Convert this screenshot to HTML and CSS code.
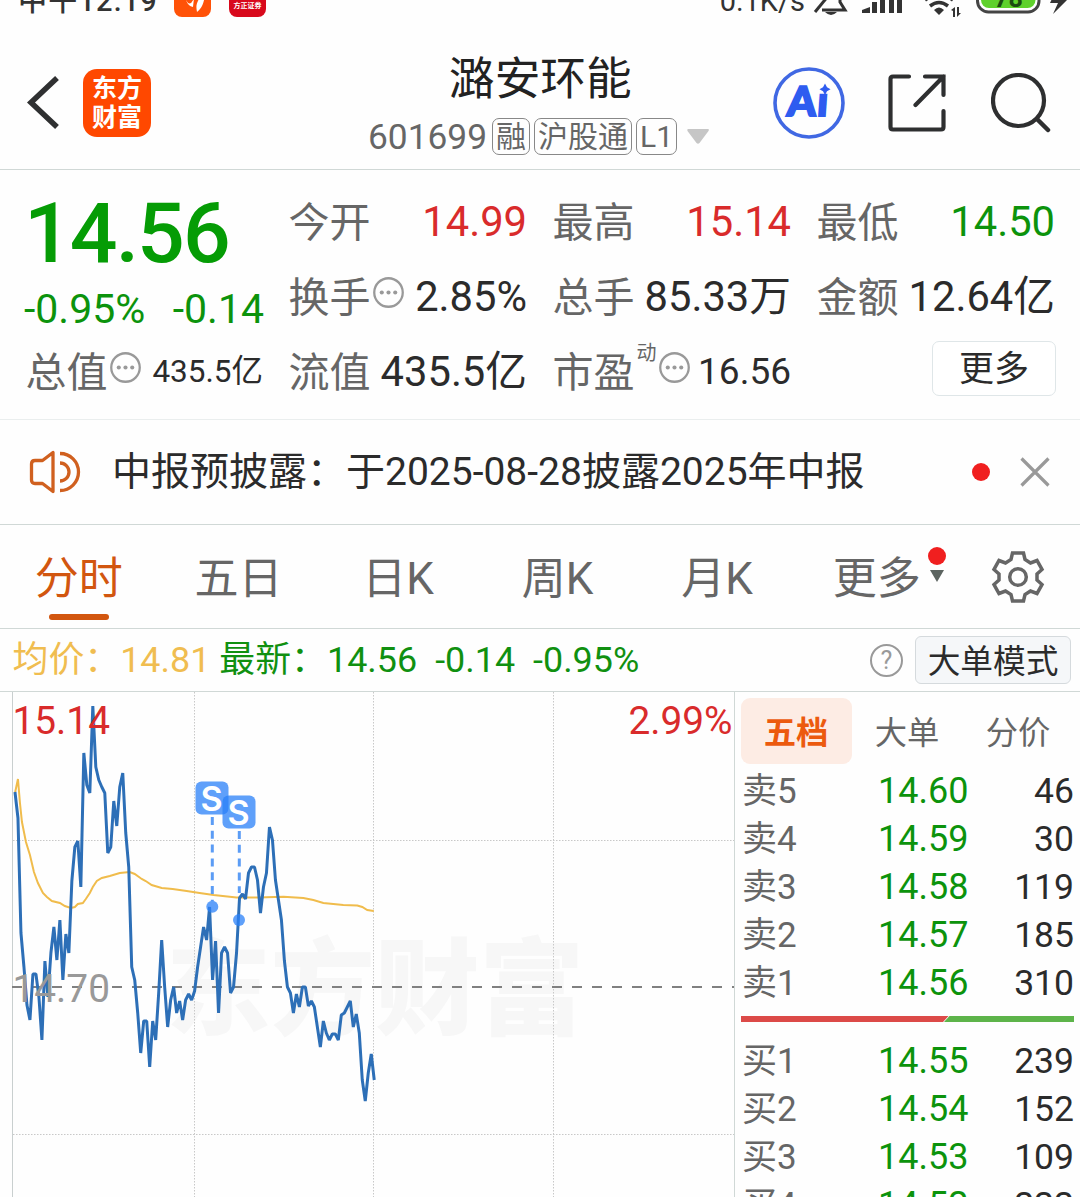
FILE: index.html
```
<!DOCTYPE html>
<html lang="zh-CN">
<head>
  <meta charset="UTF-8">
  <meta name="viewport" content="width=device-width, initial-scale=1.0">
  <title>潞安环能 601699</title>
  <link rel="stylesheet" href="styles.css">
</head>
<body>
  <div class="app">
    <!-- Status bar -->
    <div class="status-bar">
      <div class="status-left">
        <span class="status-time">中午12:19</span>
        <svg class="status-app" width="37" height="37" viewBox="0 0 37 37">
          <rect width="37" height="37" rx="8" fill="#ff5208"/>
          <path d="M12 20 Q16 28 20 18 L19 27 Q14 26 12 20Z M31 14 C30 24 27 29 23 32 C22 27 22 24 25 19Z" fill="#fff"/>
        </svg>
        <span class="status-broker">方正证券</span>
      </div>
      <div class="status-right">
        <span class="status-speed">0.1K/s</span>
        <svg width="275" height="40" viewBox="805 -22 275 40">
          <g fill="none" stroke="#333" stroke-width="3">
            <path d="M815 12 L838 -16"/>
            <path d="M822 10 H845 L840 2 V-8"/>
          </g>
          <path d="M825 12 H837 Q831 18 825 12Z" fill="#333"/>
          <g fill="#333">
            <path d="M862 13 V10 L870 7 V13Z"/>
            <rect x="872" y="2" width="5" height="11"/>
            <rect x="880" y="-3" width="5" height="16"/>
            <rect x="889" y="-8" width="5" height="21"/>
            <rect x="897" y="-12" width="5" height="25"/>
            <path d="M934 10 Q939 5 944 10 L939 15Z"/>
            <path d="M951 10 L955 7 V17 H953 V11Z M957 7 H959 V13 H961 L957 17Z"/>
            <path d="M1068 -1 L1053 14 L1058 3 L1050 3 L1058 -14 L1060 -1Z"/>
          </g>
          <path d="M925 0 Q939 -10 953 0 M930 6 Q939 -1 948 6" fill="none" stroke="#333" stroke-width="3.5"/>
          <rect x="977.500" y="-18" width="61.500" height="30" rx="11" fill="#fff" stroke="#444" stroke-width="3"/>
          <rect x="981" y="-14" width="54.500" height="22" rx="8" fill="#5fd12c"/>
          <text x="1008.500" y="7" class="battery-text">78</text>
        </svg>
      </div>
    </div>

    <!-- Header -->
    <div class="header">
      <svg class="back" width="34" height="58" viewBox="26 74 34 58">
        <path d="M57 78 L31 102.500 L57 127" fill="none" stroke="#2f3031" stroke-width="5.500"/>
      </svg>
      <div class="logo">东方<br>财富</div>
      <div class="stock">
        <div class="stock-name">潞安环能</div>
        <div class="stock-code">
          <span class="code">601699</span>
          <span class="tag">融</span>
          <span class="tag">沪股通</span>
          <span class="tag">L1</span>
          <svg width="22" height="15" viewBox="0 0 22 15"><path d="M1 0 H21 Q22.500 0 21.500 2 L12.500 14 Q11 15.500 9.500 14 L0.500 2 Q0 0 1 0Z" fill="#c6c6c6"/></svg>
        </div>
      </div>
      <div class="header-icons">
        <svg width="72" height="72" viewBox="0 0 72 72">
          <circle cx="36" cy="36" r="34" fill="none" stroke="#4068e3" stroke-width="3.600"/>
          <g transform="translate(0 48.500) skewX(-4)">
            <text x="13.500" y="0" class="ai-text">A</text>
            <text x="43.500" y="0.500" class="ai-text">ı</text>
          </g>
          <path d="M52 16.500 L54 20.300 L57.500 22.300 L54 24.300 L52 28 L50 24.300 L46.500 22.300 L50 20.300Z" fill="#2e5cf0"/>
        </svg>
        <svg width="58" height="58" viewBox="0 0 58 58">
          <path d="M21 2.500 H5 Q2.500 2.500 2.500 5 V53 Q2.500 55.500 5 55.500 H53 Q55.500 55.500 55.500 53 V37 M37 2.500 H55.500 V21 M55.500 2.500 L27.500 31" fill="none" stroke="#2e2f30" stroke-width="4.200" stroke-linecap="round"/>
        </svg>
        <svg class="search" width="60" height="60" viewBox="0 0 60 60">
          <circle cx="27.500" cy="27.500" r="25.500" fill="none" stroke="#2e2f30" stroke-width="4.200"/>
          <path d="M46 46 L57 57" stroke="#2e2f30" stroke-width="4.500" stroke-linecap="round"/>
        </svg>
      </div>
    </div>

    <!-- Quote summary -->
    <div class="quote">
      <div class="quote-main">
        <div class="price">14.56</div>
        <div class="change"><span>-0.95%</span><span>-0.14</span></div>
        <div class="cell">
          <span class="label">总值</span>
          <svg class="dots" viewBox="0 0 30 30"><use href="#more-dots"/></svg>
          <span class="value small">435.5亿</span>
        </div>
      </div>
      <div class="quote-grid">
        <div class="cell"><span class="label">今开</span><span class="value red">14.99</span></div>
        <div class="cell"><span class="label">最高</span><span class="value red">15.14</span></div>
        <div class="cell"><span class="label">最低</span><span class="value green">14.50</span></div>
        <div class="cell">
          <span class="label">换手</span>
          <svg class="dots" viewBox="0 0 30 30">
            <g id="more-dots">
              <circle cx="15" cy="15" r="13.800" fill="none" stroke="#999" stroke-width="2.200"/>
              <circle cx="8.500" cy="15" r="2" fill="#999"/>
              <circle cx="15" cy="15" r="2" fill="#999"/>
              <circle cx="21.500" cy="15" r="2" fill="#999"/>
            </g>
          </svg>
          <span class="value">2.85%</span>
        </div>
        <div class="cell"><span class="label">总手</span><span class="value">85.33万</span></div>
        <div class="cell"><span class="label">金额</span><span class="value">12.64亿</span></div>
        <div class="cell"><span class="label">流值</span><span class="value">435.5亿</span></div>
        <div class="cell">
          <span class="label">市盈</span><span class="sup">动</span>
          <svg class="dots" viewBox="0 0 30 30"><use href="#more-dots"/></svg>
          <span class="value medium">16.56</span>
        </div>
        <div class="cell"><button class="more-button">更多</button></div>
      </div>
    </div>

    <!-- Notice -->
    <div class="notice">
      <svg width="52" height="44" viewBox="0 0 52 44">
        <path d="M24 2.500 V41.500 L13.500 33.500 H6 Q2.500 33.500 2.500 30 V14 Q2.500 10.500 6 10.500 H13.500Z M31 3.500 A18.500 18.500 0 0 1 31 40.500 M31 13 A9 9 0 0 1 31 31" fill="none" stroke="#d0601f" stroke-width="3.300" stroke-linejoin="round"/>
      </svg>
      <span class="notice-text">中报预披露：于2025-08-28披露2025年中报</span>
      <span class="red-dot"></span>
      <svg width="30" height="30" viewBox="0 0 30 30"><path d="M1.500 1.500 L28.500 28.500 M28.500 1.500 L1.500 28.500" stroke="#999" stroke-width="3.200"/></svg>
    </div>

    <!-- Period tabs -->
    <div class="tabs">
      <div class="tab active">分时</div>
      <div class="tab">五日</div>
      <div class="tab">日K</div>
      <div class="tab">周K</div>
      <div class="tab">月K</div>
      <div class="tab tab-more">更多<span class="red-dot tab-dot"></span><span class="caret"></span></div>
      <svg class="gear" width="54" height="54" viewBox="-27 -27 54 54">
        <path d="M-5.500 -24 H5.500 L7 -17.500 L12.500 -14 L19 -16.500 L24 -7.500 L19 -3 V3 L24 7.500 L19 16.500 L12.500 14 L7 17.500 L5.500 24 H-5.500 L-7 17.500 L-12.500 14 L-19 16.500 L-24 7.500 L-19 3 V-3 L-24 -7.500 L-19 -16.500 L-12.500 -14 L-7 -17.500Z" fill="none" stroke="#666" stroke-width="3.500"/>
        <circle r="8.300" fill="none" stroke="#666" stroke-width="3.500"/>
      </svg>
    </div>

    <!-- Average / latest -->
    <div class="info">
      <span class="avg">均价：14.81</span>
      <span class="latest">最新：14.56</span>
      <span class="latest">-0.14</span>
      <span class="latest">-0.95%</span>
      <span class="help">?</span>
      <button class="mode-button">大单模式</button>
    </div>

    <div class="main">
      <!-- Intraday chart -->
      <svg class="chart" width="734" height="505" viewBox="0 692 734 505">
        <text x="166" y="1026" class="watermark">东方财富</text>
        <g class="grid">
          <path d="M194.500 692 V1197 M373.500 692 V1197 M553.500 692 V1197 M13 840.500 H734 M13 1134.500 H734"/>
        </g>
        <path d="M12.500 692 V1197" stroke="#c9cfcf"/>
        <path d="M12 987 H734" class="base-line"/>
        <g transform="scale(.998 1)">
          <polyline class="avg-line" points="15,793 18,779 20,803 22,822 26,842 30,855 34,872 38,883 43,893 47,897 52,901 60,903 65,906 71,908 75,907 78,904 83,903 86,899 90,893 93,887 97,881 102,878 110,876 120,873 130,872 135,874 142,879 146,881 152,885 162,888 173,889 187,891 200,893 214,895 237,897.5 258,897.5 284,896.700 304,898 314,900 324,903 344,905 358,905.500 363,907 368,910 374.500,911"/>
          <polyline class="price-line" points="15,792 18,818 21,933 24,967 27,1005 30,1020 33,974 36,974 39,997 42,1040 45,961 48,997 51,953 54,927 57,960 60,920 63,980 66,934 69,953 72,881 75,847 78,841 81,887 84,753 87,785 90,793 93,706 96,767 99,780 102,787 105,793 108,853 111,847 114,801 117,826 120,787 123,773 126,833 129,867 132,967 135,980 138,1013 141,1053 144,1021 147,1021 150,1067 153,1021 156,1040 159,993 162,940 165,987 168,1027 171,1000 174,987 177,1013 180,1001 183,1020 186,1000 189,994 192,1000 195,991 198,967 201,947 204,927 207,940 210,907 213,980 216,941 219,1013 222,953 225,947 228,953 231,993 234,987 237,953 240,898 243,894 246,899 249,873 252,867 255,867 258,880 261,913 264,887 267,873 270,827 273,840 276,880 279,900 282,920 285,961 288,987 291,993 294,1013 297,994 300,1007 303,987 306,987 309,1006 312,1001 315,1007 318,1027 321,1047 324,1021 327,1033 330,1040 333,1034 336,1034 339,1040 342,1015 345,1013 348,1007 351,1001 354,1027 357,1014 360,1033 363,1080 366,1101 369,1073 372,1054 375,1080"/>
        </g>
        <!-- Sell markers -->
        <g class="marker">
          <path d="M212.300 817 V901"/>
          <path d="M239.300 831 V893"/>
          <circle cx="212.300" cy="906.700" r="6"/>
          <circle cx="239" cy="920" r="6"/>
          <rect x="195.500" y="781.500" width="33" height="33" rx="6"/>
          <rect x="222.500" y="795.500" width="33" height="33" rx="6"/>
          <text x="211.500" y="810.500">S</text>
          <text x="238.500" y="824.500">S</text>
        </g>
        <text x="12.500" y="734" class="axis high">15.14</text>
        <text x="732.500" y="734" class="axis high end">2.99%</text>
        <text x="12.500" y="1002" class="axis middle">14.70</text>
      </svg>

      <!-- Order book -->
      <div class="book">
        <div class="book-tabs">
          <span class="book-tab selected">五档</span>
          <span class="book-tab">大单</span>
          <span class="book-tab">分价</span>
        </div>
        <div class="book-row"><span>卖5</span><span class="book-price">14.60</span><span class="book-size">46</span></div>
        <div class="book-row"><span>卖4</span><span class="book-price">14.59</span><span class="book-size">30</span></div>
        <div class="book-row"><span>卖3</span><span class="book-price">14.58</span><span class="book-size">119</span></div>
        <div class="book-row"><span>卖2</span><span class="book-price">14.57</span><span class="book-size">185</span></div>
        <div class="book-row"><span>卖1</span><span class="book-price">14.56</span><span class="book-size">310</span></div>
        <svg class="ratio" width="333" height="6" viewBox="0 0 333 6">
          <path d="M0 0 H207.500 L202 6 H0Z" fill="#dc4a48"/>
          <path d="M208.500 0 H333 V6 H203Z" fill="#5db44a"/>
        </svg>
        <div class="book-row"><span>买1</span><span class="book-price">14.55</span><span class="book-size">239</span></div>
        <div class="book-row"><span>买2</span><span class="book-price">14.54</span><span class="book-size">152</span></div>
        <div class="book-row"><span>买3</span><span class="book-price">14.53</span><span class="book-size">109</span></div>
        <div class="book-row"><span>买4</span><span class="book-price">14.52</span><span class="book-size">222</span></div>
      </div>
    </div>
  </div>
</body>
</html>
```
FILE: styles.css
```
* {
  box-sizing: border-box;
}

body {
  margin: 0;
  background: #fefefe;
  color: #2b2b2b;
  font-family: Roboto, "Noto Sans CJK SC", sans-serif;
}

svg {
  display: block;
  flex: none;
}

button {
  font-family: inherit;
  color: #2b2b2b;
  padding: 0;
}

.app {
  width: 1080px;
  height: 1197px;
  overflow: hidden;
}

/* Status bar, scrolled partly out of view */
.status-bar {
  height: 30px;
  display: flex;
  justify-content: space-between;
  color: #333;
}

.status-left,
.status-right {
  display: flex;
  align-items: flex-start;
  margin-top: -22px;
}

.status-left {
  padding-left: 18px;
}

.status-time,
.status-speed {
  font-size: 29px;
  line-height: 46px;
  font-weight: 500;
}

.status-time {
  width: 156px;
  letter-spacing: 1.200px;
  white-space: nowrap;
}

.status-speed {
  font-weight: 400;
}

.status-app {
  margin-top: 2px;
}

.status-broker {
  width: 37px;
  height: 37px;
  margin: 2px 0 0 18px;
  padding-top: 17px;
  border-radius: 8px;
  background: #d8091c;
  color: #fff;
  font-size: 7px;
  font-weight: 700;
  line-height: 18px;
  text-align: center;
}

.battery-text {
  font-size: 25px;
  font-weight: 700;
  text-anchor: middle;
  fill: #1c4a10;
}

/* Header */
.header {
  height: 140px;
  display: flex;
  align-items: center;
  padding: 6px 29px 0 26px;
  border-bottom: 1px solid #d0d8d6;
}

.logo {
  width: 68px;
  height: 68px;
  margin-left: 23px;
  padding-top: 5px;
  border-radius: 14px;
  background: #ff4800;
  color: #fff;
  font-size: 25px;
  font-weight: 700;
  line-height: 29px;
  text-align: center;
}

.stock {
  width: 350px;
  margin: 6px 0 0 217px;
  white-space: nowrap;
}

.stock-name {
  height: 62px;
  margin-left: 81px;
  font-size: 45.700px;
  line-height: 62px;
  color: #222;
}

.stock-code {
  display: flex;
  align-items: center;
  gap: 4px;
  color: #666;
}

.stock-code svg {
  margin-left: 6px;
}

.code {
  margin-right: 1px;
  font-size: 35.300px;
  line-height: 52px;
}

.tag {
  height: 37px;
  padding: 0 3px;
  border: 1.500px solid #888;
  border-radius: 7px;
  font-size: 30px;
  line-height: 36px;
}

.header-icons {
  display: flex;
  align-items: center;
  margin-left: auto;
  gap: 43px;
}

.header-icons .search {
  margin-left: 2px;
}

.ai-text {
  font-family: Lato, sans-serif;
  font-size: 41px;
  font-weight: 900;
  fill: #2e5cf0;
  stroke: #2e5cf0;
  stroke-width: 2px;
}

/* Quote summary */
.quote {
  height: 250px;
  display: flex;
  padding: 14px 25px 0 26px;
  border-bottom: 1px solid #eaeeee;
}

.quote-main {
  width: 237px;
  margin-right: 26px;
}

.price {
  height: 99px;
  margin-left: -2px;
  font-size: 84px;
  font-weight: 500;
  line-height: 99px;
  letter-spacing: -1.900px;
  color: #059c05;
}

.change {
  height: 51px;
  display: flex;
  justify-content: space-between;
  margin: 0 -1px 0 -2px;
  font-size: 41px;
  line-height: 52px;
  color: #0c930c;
}

.quote-grid {
  display: grid;
  grid-template-columns: 238px 238px 238px;
  grid-auto-rows: 75px;
  column-gap: 26px;
}

.cell {
  height: 75px;
  display: flex;
  align-items: center;
  line-height: 75px;
}

.label {
  margin: 3px 0 0 -0.500px;
  font-size: 41px;
  color: #666;
}

.dots {
  width: 31px;
  height: 31px;
  margin: -8px 0 0 2px;
}

.value {
  margin-left: auto;
  font-size: 41.700px;
  white-space: nowrap;
}

.value.small {
  font-size: 31.500px;
}

.value.medium {
  font-size: 37px;
}

.sup {
  margin: -37px 0 0 2px;
  font-size: 20px;
  color: #666;
}

.red {
  color: #d92b2b;
}

.green {
  color: #0c930c;
}

.more-button {
  width: 124px;
  height: 55px;
  margin: -6px -1px 0 auto;
  border: 1.500px solid #dfe6e8;
  border-radius: 7px;
  background: #fff;
  font-size: 35px;
  line-height: 52px;
  padding-top: 2px;
}

/* Notice */
.notice {
  height: 105px;
  display: flex;
  align-items: center;
  padding: 0 30px 0 29px;
  border-bottom: 1px solid #d0d8d6;
}

.notice-text {
  flex: 1;
  margin-left: 31px;
  font-size: 39px;
  line-height: 104px;
}

.red-dot {
  width: 18px;
  height: 18px;
  border-radius: 50%;
  background: #f01f1f;
}

.notice .red-dot {
  margin-right: 30px;
}

/* Period tabs */
.tabs {
  height: 104px;
  display: grid;
  grid-template-columns: repeat(6, 159.600px) 1fr;
  align-items: center;
  margin-left: -1px;
  border-bottom: 1px solid #d0d8d6;
  font-size: 44px;
  color: #666;
}

.tab {
  height: 104px;
  line-height: 108px;
  position: relative;
  text-align: center;
}

.tab.active {
  color: #d2560f;
}

.tab.active::after {
  content: "";
  position: absolute;
  left: 50px;
  bottom: 9px;
  width: 60px;
  height: 6px;
  border-radius: 3px;
  background: #d2560f;
}

.tab-dot {
  position: absolute;
  right: 11px;
  top: 22px;
}

.caret {
  position: absolute;
  right: 13px;
  top: 45px;
  border: 7px solid transparent;
  border-top: 12px solid #5c6460;
  border-bottom: 0;
}

.gear {
  margin-left: 34.500px;
}

/* Average / latest */
.info {
  height: 63px;
  display: flex;
  align-items: center;
  padding: 0 9px 0 12.500px;
  border-bottom: 1px solid #d0d8d6;
  font-size: 35.900px;
  line-height: 62px;
  white-space: nowrap;
}

.avg {
  margin-right: 9px;
  color: #f0bd50;
}

.latest {
  margin-right: 18px;
  color: #109010;
}

.help {
  width: 33px;
  height: 33px;
  margin-left: auto;
  border: 2.500px solid #999;
  border-radius: 50%;
  color: #999;
  font-size: 25px;
  line-height: 29px;
  text-align: center;
}

.mode-button {
  width: 156px;
  height: 48px;
  margin-left: 12px;
  padding-top: 5px;
  border: 1px solid #d5dadd;
  border-radius: 6px;
  background: #f5f7f9;
  font-size: 32.700px;
  line-height: 41px;
}

.main {
  display: flex;
  height: 505px;
}

/* Chart */
.watermark {
  font-size: 104.500px;
  font-weight: 900;
  fill: #f7f7f7;
}

.grid {
  fill: none;
  stroke: #c8c8c8;
  stroke-dasharray: 1.500 1.500;
}

.base-line {
  stroke: #808080;
  stroke-width: 2;
  stroke-dasharray: 10 10;
}

.avg-line {
  fill: none;
  stroke: #f0bc4c;
  stroke-width: 2;
}

.price-line {
  fill: none;
  stroke: #2d6fb7;
  stroke-width: 3;
  stroke-linejoin: bevel;
}

.marker path {
  stroke: #5b9cf5;
  stroke-width: 3;
  stroke-dasharray: 8 5.800;
}

.marker rect,
.marker circle {
  fill: #2a80f8;
  fill-opacity: 0.75;
}

.marker text {
  font-family: Inter, sans-serif;
  font-size: 34px;
  font-weight: 600;
  text-anchor: middle;
  fill: #fff;
}

.axis {
  font-size: 38.800px;
}

.axis.high {
  fill: #d92b2b;
}

.axis.end {
  text-anchor: end;
}

.axis.middle {
  fill: #999;
}

/* Order book */
.book {
  width: 346px;
  padding: 6px 6px 0;
  border-left: 1px solid #d0d8d6;
  overflow: hidden;
}

.book-tabs {
  display: flex;
  height: 69.500px;
}

.book-tab {
  width: 111px;
  height: 66px;
  border-radius: 9px;
  font-size: 32.300px;
  line-height: 71px;
  text-align: center;
  text-indent: -1px;
  color: #666;
}

.book-tab.selected {
  background: #fdece4;
  color: #ec5a0e;
  font-weight: 700;
}

.book-row {
  display: grid;
  grid-template-columns: 100px 126.500px 1fr;
  height: 48px;
  padding-left: 1px;
  font-size: 35px;
  line-height: 48px;
  color: #666;
}

.book-price,
.book-size {
  font-size: 36px;
  line-height: 46px;
  text-align: right;
}

.book-price {
  color: #0c930c;
}

.book-size {
  font-size: 35.500px;
  color: #2b2b2b;
}

.ratio {
  margin: 8.500px 0 15.500px;
}
```
